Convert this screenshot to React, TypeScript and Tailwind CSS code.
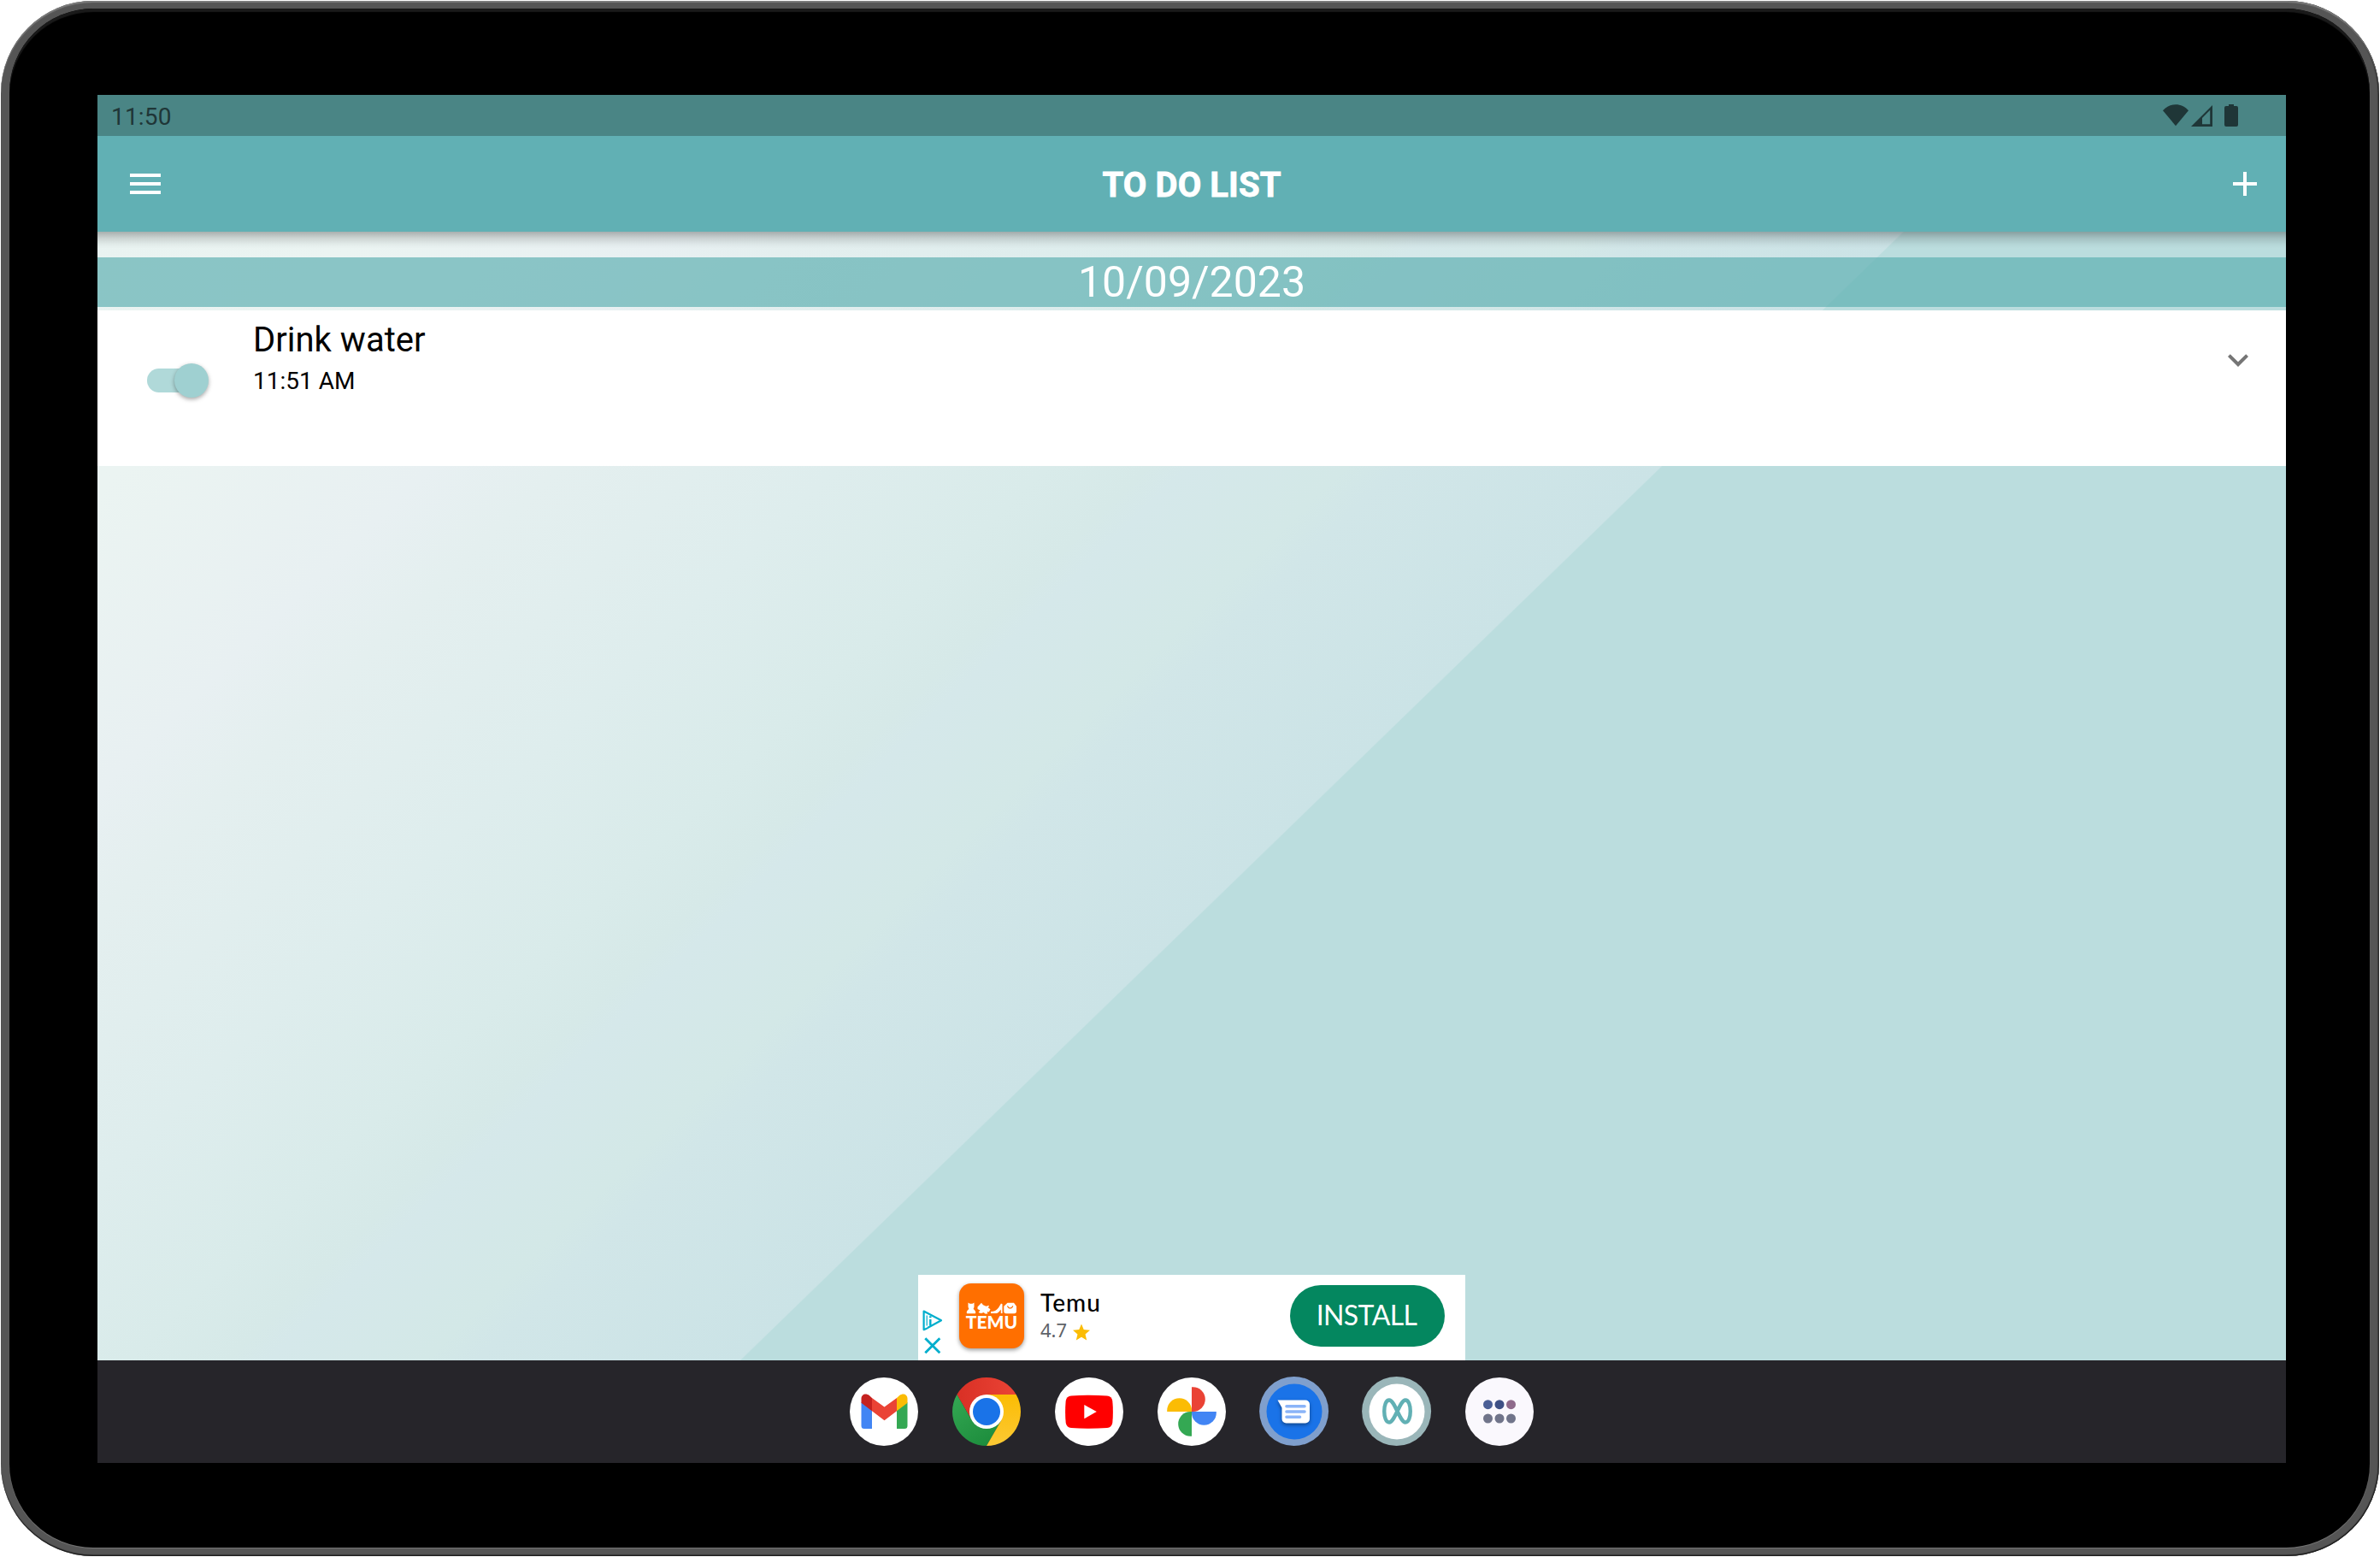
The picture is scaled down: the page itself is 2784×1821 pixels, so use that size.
import React from "react";

function StatusBar() {
  return (
    <div className="flex h-12 shrink-0 items-center justify-between bg-[#4a8585] pl-4 pr-14 text-[#1f3637]">
      <span className="pt-[3px] text-[28px] leading-[48px] tracking-[0.2px]">11:50</span>
      <div className="flex h-12 items-start pt-[11px]">
        <svg width="30" height="26" viewBox="0 0 30 26" fill="currentColor" className="mr-[3px]">
          <path d="M15 25.2 0 7.2C4 2.6 9.3 0.2 15 0.2S26 2.6 30 7.2Z" />
        </svg>
        <svg width="26" height="26" viewBox="0 0 26 26" fill="currentColor" className="mr-[13px]">
          <path fillRule="evenodd" d="M0 26 25 1V26ZM13 23.2H22.2V6.8L13 16Z" />
        </svg>
        <svg width="16" height="26" viewBox="0 0 16 26" fill="currentColor">
          <path d="M5 0h6v2h3a2 2 0 0 1 2 2v20a2 2 0 0 1-2 2H2a2 2 0 0 1-2-2V4a2 2 0 0 1 2-2h3Z" />
        </svg>
      </div>
    </div>
  );
}

function AppBar() {
  return (
    <header className="relative z-10 flex h-28 shrink-0 items-center justify-between bg-[#61b0b4] pl-[38px] pr-[34px] text-white">
      <div className="flex w-9 flex-col gap-1.5">
        <span className="h-1 bg-white" />
        <span className="h-1 bg-white" />
        <span className="h-1 bg-white" />
      </div>
      <h1 className="mr-3 pt-[3px] text-[40px] font-bold leading-none tracking-[0.1px] [-webkit-text-stroke:0.8px_white]">TO DO LIST</h1>
      <svg width="28" height="28" viewBox="0 0 28 28" fill="white">
        <path d="M12 0h4v12h12v4H16v12h-4V16H0v-4h12Z" />
      </svg>
    </header>
  );
}

function Toggle() {
  return (
    <div className="relative mt-[68px] h-7 w-[68px] rounded-full bg-[#b0d9d9]">
      <div className="absolute -top-1.5 left-8 size-10 rounded-full bg-[#9fd0d1] shadow-[0_2px_5px_rgba(0,0,0,0.35)]" />
    </div>
  );
}

function TaskCard() {
  return (
    <div className="mt-1 flex h-[182px] shrink-0 bg-white pl-[58px] pr-8 text-black">
      <Toggle />
      <div className="ml-14 flex flex-1 flex-col pt-[11px]">
        <span className="text-[40px] leading-[47px]">Drink water</span>
        <span className="mt-2 text-[28px] leading-[34px]">11:51 AM</span>
      </div>
      <svg width="48" height="48" viewBox="0 0 24 24" fill="#757575" className="mt-[34px]">
        <path d="M16.59 8.59 12 13.17 7.41 8.59 6 10l6 6 6-6Z" />
      </svg>
    </div>
  );
}

function TemuLogo() {
  return (
    <div className="mt-2.5 flex size-[76px] shrink-0 flex-col items-center rounded-[14px] bg-[#ff6f00] pt-[22px] shadow-[0_2px_5px_rgba(0,0,0,0.4)]">
      <svg width="60" height="14" viewBox="0 0 60 14" fill="white" className="shrink-0">
        <path d="M2.500.5 4.500 1.800h3L9.500.5v4.500c0 1.500-.8 2-.8 3 2.300 1.500 3.300 4.500 2 5.300H1.300C0 12.500 1 9.500 3.300 8 3.300 7 2.500 6.500 2.500 5Z" />
        <path d="M13.500 5.500 18 .8l2 2.500 3.500 1.500 3.500-1-1 2.800 2.500 1.700-1.700 3.200-2-.5.500 2.500h-3l-1.500-1.500-3.300 1-3-1L16.500 9.500 13.500 8Z" />
        <path d="M29 13V11c4 0 6.500-1.500 9-4.500L41 1.500l1.500.7V13h-1.700V8.500c-2 2.500-3.300 4.500-6 4.500Z" />
        <path fillRule="evenodd" d="M48.500.8h7.500l3 4v5.700q0 2.700-2.700 2.700H47q-2.700 0-2.700-2.700V4.800ZM48 4.200c.8 4.500 6.500 4.500 7.300 0h-1.200c-.8 2.700-4.100 2.700-4.900 0Z" />
      </svg>
      <span className="font-['Lato',sans-serif] text-[21px] font-black leading-[18px] text-white">TEMU</span>
    </div>
  );
}

function AdBanner() {
  return (
    <div className="mt-auto flex h-[100px] w-[640px] shrink-0 self-center bg-white">
      <div className="flex w-12 shrink-0 flex-col pl-[5px] pt-[41px]">
        <svg width="24" height="25" viewBox="0 0 24 25" fill="none" stroke="#00aecd" className="shrink-0">
          <path d="M5 21.800 1.600 23.200V1.500L22 12.300 6.500 20.800" strokeWidth="2.200" strokeLinejoin="round" strokeLinecap="round" />
          <path d="M5.200 6.500v12" strokeWidth="1.200" />
          <path d="M9.300 11v7.500M9.300 7.300v2" strokeWidth="2.400" />
        </svg>
        <svg width="20" height="20" viewBox="0 0 20 20" fill="none" stroke="#00aecd" strokeWidth="2.800" className="ml-0.5 mt-[7px] shrink-0">
          <path d="m1.300 1.300 17 17M18.300 1.300l-17 17" />
        </svg>
      </div>
      <TemuLogo />
      <div className="ml-[19px] flex flex-col">
        <span className="mt-[15px] font-['Lato',sans-serif] text-[28px] font-medium leading-[34px] tracking-[1px] text-black">Temu</span>
        <span className="flex items-center font-['Noto_Sans',sans-serif] text-[22px] leading-[30px] text-[#5f6368]">
          4.7
          <svg width="20" height="20" viewBox="1 1 22 22" fill="#fbbc04" className="ml-[7px] mt-1.5">
            <path d="M12 18.300 18.800 22.500 17 14.700 23 9.500 15 8.800 12 1.500 9 8.800 1 9.500 7 14.700 5.200 22.500Z" />
          </svg>
        </span>
      </div>
      <button className="ml-auto mr-6 mt-3 h-[72px] w-[181px] rounded-full bg-[#04875f] pb-[3px] pr-0.5 font-['Lato',sans-serif] text-[32px] leading-none tracking-[-0.6px] text-white">
        INSTALL
      </button>
    </div>
  );
}

function Gmail() {
  return (
    <svg width="80" height="80" viewBox="0 0 80 80">
      <circle cx="40" cy="40" r="40" fill="white" />
      <path d="M13.500 29v27.500a3.500 3.500 0 0 0 3.500 3.500h9V37Z" fill="#4285f4" />
      <path d="M67.500 29v27.500a3.500 3.500 0 0 1-3.500 3.500h-9V37Z" fill="#34a853" />
      <path d="M55 24v15.300l12.500-9.500V25c0-5.500-5.300-7-9.300-4Z" fill="#fbbc04" />
      <path d="M26 39.300V24l14.500 10.500L55 24v15.300L40.500 50.300Z" fill="#ea4335" />
      <path d="M13.500 25v4.800L26 39.300V24l-3.200-3c-4-3-9.300-1.500-9.300 4Z" fill="#c5221f" />
    </svg>
  );
}

function Chrome() {
  return (
    <svg width="80" height="80" viewBox="0 0 80 80">
      <defs>
        <linearGradient id="cr" x1="0" x2="1"><stop stopColor="#d93025" /><stop offset="1" stopColor="#ea4335" /></linearGradient>
        <linearGradient id="cg" x1="0" y1="0" x2=".6" y2="1"><stop stopColor="#34a853" /><stop offset="1" stopColor="#1e8e3e" /></linearGradient>
        <linearGradient id="cy" x1="0" x2="0" y1="1" y2="0"><stop stopColor="#fcc934" /><stop offset="1" stopColor="#fbbc04" /></linearGradient>
      </defs>
      <path d="M40 40 22.700 50 5.360 20A40 40 0 0 1 74.640 20H40Z" fill="url(#cr)" />
      <path d="M40 40 57.300 50 40 80A40 40 0 0 1 5.360 20L22.700 50Z" fill="url(#cg)" />
      <path d="M40 40V20h34.640A40 40 0 0 1 40 80L57.300 50Z" fill="url(#cy)" />
      <circle cx="40" cy="40" r="20" fill="white" />
      <circle cx="40" cy="40" r="16" fill="#1a73e8" />
    </svg>
  );
}

function YouTube() {
  return (
    <svg width="80" height="80" viewBox="0 0 80 80">
      <circle cx="40" cy="40" r="40" fill="white" />
      <path d="M19 21.500Q40 20 61 21.500 66.500 22 67.300 27.500 68.500 40 67.300 53 66.500 58.500 61 59 40 60.500 19 59 13.500 58.500 12.700 53 11.500 40 12.700 27.500 13.500 22 19 21.500Z" fill="#f00" />
      <path d="m34.300 32 14.500 8.100-14.500 8.100Z" fill="white" />
    </svg>
  );
}

function Photos() {
  return (
    <svg width="80" height="80" viewBox="0 0 80 80">
      <circle cx="40" cy="40" r="40" fill="white" />
      <path d="M40 11.200h1.500A14.300 14.400 0 0 1 41.500 40H40Z" fill="#ea4335" />
      <path d="M40 40h28.800v1.500A14.400 14.300 0 0 1 40 41.500Z" fill="#4285f4" />
      <path d="M40 40v28.800h-1.500A14.300 14.400 0 0 1 38.500 40Z" fill="#34a853" />
      <path d="M40 40H11.200v-1.500A14.400 14.300 0 0 1 40 38.500Z" fill="#fbbc04" />
    </svg>
  );
}

function Messages() {
  return (
    <svg width="80" height="80" viewBox="0 0 80 80" className="overflow-visible">
      <circle cx="39.600" cy="39.500" r="40.500" fill="#7f9fcd" />
      <circle cx="40" cy="40" r="32.500" fill="#1a73e8" />
      <g className="drop-shadow-[0_2px_2px_rgba(0,0,0,0.4)]">
        <path d="M20.500 26.500H53a5 5 0 0 1 5 5v17a5 5 0 0 1-5 5H30.500a5 5 0 0 1-5-5V35.500Z" fill="white" />
      </g>
      <path d="M31 33.700h21M31 40h21M31 46.300h15.500" stroke="#8ab4f8" strokeWidth="3.600" strokeLinecap="round" />
    </svg>
  );
}

function InfinityApp() {
  return (
    <svg width="80" height="80" viewBox="0 0 80 80" className="overflow-visible">
      <circle cx="39.600" cy="39.500" r="40.500" fill="#9ab6b9" />
      <circle cx="40" cy="40" r="32.500" fill="white" />
      <path d="M50 26.500C57.700 26.500 57.700 52.500 50 52.500 43.500 52.500 37.500 26.500 31 26.500 23.300 26.500 23.300 52.500 31 52.500 37.500 52.500 43.500 26.500 50 26.500Z" fill="none" stroke="#61b0b4" strokeWidth="4.400" />
    </svg>
  );
}

function AllApps() {
  return (
    <svg width="80" height="80" viewBox="0 0 80 80">
      <circle cx="40" cy="40" r="40" fill="#faf8fd" />
      <circle cx="26.500" cy="31.700" r="5.500" fill="#4b5f96" />
      <circle cx="40" cy="31.700" r="5.500" fill="#3e5085" />
      <circle cx="53.500" cy="31.700" r="5.500" fill="#8e6a8b" />
      <circle cx="26.500" cy="48" r="5.500" fill="#70748a" />
      <circle cx="40" cy="48" r="5.500" fill="#70748a" />
      <circle cx="53.500" cy="48" r="5.500" fill="#70748a" />
    </svg>
  );
}

function Taskbar() {
  return (
    <nav className="flex h-[120px] shrink-0 items-center justify-center gap-10 bg-[#26252a]">
      <Gmail />
      <Chrome />
      <YouTube />
      <Photos />
      <Messages />
      <InfinityApp />
      <AllApps />
    </nav>
  );
}

export default function App() {
  return (
    <div className="h-[1821px] w-[2784px] overflow-hidden bg-white p-px font-['Roboto',sans-serif]">
      <div className="h-[1819px] w-[2782px] rounded-[108px] bg-[#555] pb-2.5 pl-2.5 pr-[11px] pt-[9px] shadow-[inset_0_2px_1px_#7c7c7c,inset_0_-1.5px_1px_#1c1c1c,inset_-1.5px_0_1px_#2a2a2a]">
        <div className="h-[1800px] w-[2761px] rounded-[98px] bg-black pl-[103px] pt-[101px] shadow-[inset_0_4px_1px_#1a1a1a,0_1px_1px_#777]">
          <div className="flex h-[1600px] w-[2560px] flex-col overflow-hidden">
            <StatusBar />
            <AppBar />
            <main className="flex flex-1 flex-col bg-[linear-gradient(135.87deg,#e9f3f1_0%,#ebf4f2_8%,#e8f0f2_17.2%,#e4efef_21%,#deeded_29.3%,#d9ebea_35.6%,#d6e9e8_38.6%,#d5e8ea_39.8%,#d3e8e7_44.5%,#d1e6e8_46%,#cbe3e6_53.86%,#bbddde_53.91%)]">
              <div className="h-[30px] shrink-0 bg-[linear-gradient(to_bottom,rgba(0,0,0,0.28),rgba(0,0,0,0.13)_25%,rgba(0,0,0,0.03)_50%,transparent_65%)]" />
              <div className="flex h-[58px] shrink-0 items-center justify-center bg-[rgba(90,174,175,0.667)] text-[50px] leading-none text-white">
                10/09/2023
              </div>
              <TaskCard />
              <AdBanner />
            </main>
            <Taskbar />
          </div>
        </div>
      </div>
    </div>
  );
}
